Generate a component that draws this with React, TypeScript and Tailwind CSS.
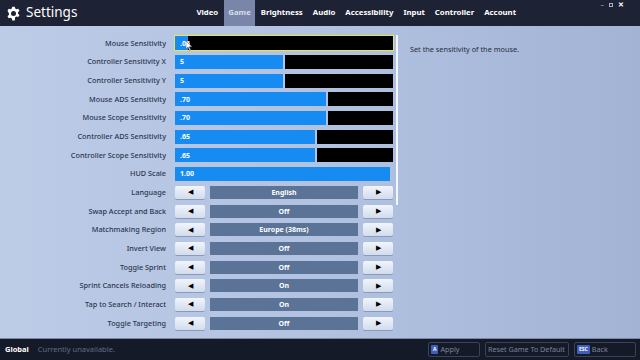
import React from 'react';

type Row =
  | { label: string; kind: 'slider'; value: string; pct: number; focused?: boolean }
  | { label: string; kind: 'choice'; value: string };

const rows: Row[] = [
  { label: 'Mouse Sensitivity', kind: 'slider', value: '.06', pct: 6, focused: true },
  { label: 'Controller Sensitivity X', kind: 'slider', value: '5', pct: 50 },
  { label: 'Controller Sensitivity Y', kind: 'slider', value: '5', pct: 50 },
  { label: 'Mouse ADS Sensitivity', kind: 'slider', value: '.70', pct: 70 },
  { label: 'Mouse Scope Sensitivity', kind: 'slider', value: '.70', pct: 70 },
  { label: 'Controller ADS Sensitivity', kind: 'slider', value: '.65', pct: 65 },
  { label: 'Controller Scope Sensitivity', kind: 'slider', value: '.65', pct: 65 },
  { label: 'HUD Scale', kind: 'slider', value: '1.00', pct: 100 },
  { label: 'Language', kind: 'choice', value: 'English' },
  { label: 'Swap Accept and Back', kind: 'choice', value: 'Off' },
  { label: 'Matchmaking Region', kind: 'choice', value: 'Europe (38ms)' },
  { label: 'Invert View', kind: 'choice', value: 'Off' },
  { label: 'Toggle Sprint', kind: 'choice', value: 'Off' },
  { label: 'Sprint Cancels Reloading', kind: 'choice', value: 'On' },
  { label: 'Tap to Search / Interact', kind: 'choice', value: 'On' },
  { label: 'Toggle Targeting', kind: 'choice', value: 'Off' },
];

const tabs = ['Video', 'Game', 'Brightness', 'Audio', 'Accessibility', 'Input', 'Controller', 'Account'];

const Gear = () => (
  <svg width="15" height="15" viewBox="0 0 24 24" fill="white">
    <path
      fillRule="evenodd"
      d="M10 1h4l.6 3.1a8 8 0 0 1 2 1.2l3-1 2 3.4-2.4 2.1a8 8 0 0 1 0 2.4l2.4 2.1-2 3.4-3-1a8 8 0 0 1-2 1.2L14 23h-4l-.6-3.1a8 8 0 0 1-2-1.2l-3 1-2-3.4 2.4-2.1a8 8 0 0 1 0-2.4L2.4 7.7l2-3.4 3 1a8 8 0 0 1 2-1.2L10 1zm2 7a4 4 0 1 0 0 8 4 4 0 0 0 0-8z"
    />
  </svg>
);

const ArrowBtn = ({ dir }: { dir: 'l' | 'r' }) => (
  <div className="w-[30px] h-[13px] rounded-[2px] bg-gradient-to-b from-[#f1f5fc] to-[#d3dcec] shadow-[0_1px_0_#8a9abb] flex items-center justify-center">
    <span className="text-[6.5px] leading-none text-black">{dir === 'l' ? '◀' : '▶'}</span>
  </div>
);

const Slider = ({ row }: { row: Extract<Row, { kind: 'slider' }> }) => (
  <div
    className={`relative w-[218px] h-[14px] flex ${row.focused ? 'outline outline-1 outline-[#e6e84a] bg-black' : ''}`}
  >
    <div
      className="h-full bg-[#168cf2] flex items-center pl-[5px]"
      style={{ width: row.pct === 100 ? '215px' : `${(row.pct / 100) * 216}px` }}
    >
      <span className="text-[7px] font-bold text-white leading-none">{row.value}</span>
    </div>
    {row.pct < 100 && <div className="flex-1 h-full bg-black ml-[2px]" />}
    {row.focused && (
      <svg className="absolute left-[11px] top-[5px]" width="7" height="10" viewBox="0 0 7 10">
        <path d="M0 0 L0 8 L2 6 L3.5 9.5 L4.6 9 L3.2 5.8 L6 5.8 Z" fill="white" stroke="#555" strokeWidth="0.5" />
      </svg>
    )}
  </div>
);

const Choice = ({ value }: { value: string }) => (
  <div className="w-[218px] flex items-center">
    <ArrowBtn dir="l" />
    <div className="ml-[5px] w-[148px] h-[13px] bg-[#5a7397] flex items-center justify-center">
      <span className="text-[7px] font-bold text-white leading-none">{value}</span>
    </div>
    <div className="ml-[5px]">
      <ArrowBtn dir="r" />
    </div>
  </div>
);

const FooterBtn = ({ k, label, w }: { k?: string; label: string; w: string }) => (
  <div className={`${w} h-[15px] border border-[#3b4259] rounded-[2px] flex items-center px-[2px] gap-[2px] whitespace-nowrap overflow-hidden`}>
    {k && (
      <span className="bg-[#3f5fb8] text-white text-[5px] font-bold leading-none px-[2px] py-[2px] rounded-[1px]">{k}</span>
    )}
    <span className="text-[7.2px] text-[#7d8499] leading-none">{label}</span>
  </div>
);

const App: React.FC = () => {
  return (
    <div className="w-[640px] h-[360px] overflow-hidden flex flex-col" style={{ fontFamily: '"Noto Sans", "Open Sans", sans-serif' }}>
      {/* Header */}
      <div className="h-[26px] bg-[#1e2235] flex items-stretch relative">
        <div className="flex items-center pl-[6px] gap-[5px]">
          <Gear />
          <span className="text-white text-[13.5px] leading-none">Settings</span>
        </div>
        <div className="flex items-stretch ml-[115px]">
          {tabs.map(t => (
            <div
              key={t}
              className={`flex items-center px-[4px] text-[7.8px] font-bold leading-none ${
                t === 'Game' ? 'bg-[#7986a9] text-[#d8deeb]' : 'text-white'
              } ${t === 'Video' ? '' : 'ml-[2px]'}`}
            >
              {t}
            </div>
          ))}
        </div>
        <div className="absolute right-[16px] top-[1px] flex items-center gap-[5px] text-[#aab0c2] text-[7px] leading-none">
          <span>–</span>
          <span className="w-[4px] h-[4px] border border-[#aab0c2]" />
          <span className="text-white font-bold">✕</span>
        </div>
      </div>

      {/* Content */}
      <div className="flex-1 bg-gradient-to-r from-[#bccbe6] via-[#b2c2e1] to-[#a3b3d4] flex pt-[8px]">
        <div className="flex flex-col">
          {rows.map(r => (
            <div key={r.label} className="h-[18.67px] flex items-center">
              <div className="w-[166px] text-right text-[7.3px] font-medium text-[#2c3650] leading-none">{r.label}</div>
              <div className="ml-[9px]">{r.kind === 'slider' ? <Slider row={r} /> : <Choice value={r.value} />}</div>
            </div>
          ))}
        </div>
        <div className="ml-[3px] mt-[1px] w-[2px] h-[170px] bg-[#f3f6fc]" />
        <div className="ml-[12px] pt-[12px] text-[7.3px] text-[#252d42] leading-none">Set the sensitivity of the mouse.</div>
      </div>

      {/* Footer */}
      <div className="h-[22px] bg-[#151a29] border-t border-[#7a88a8] flex items-center pl-[5px] pr-[4px]">
        <span className="text-white text-[7.5px] font-bold leading-none">Global</span>
        <span className="ml-[9px] text-[#626a80] text-[7.5px] leading-none">Currently unavailable.</span>
        <div className="ml-auto flex gap-[5px]">
          <FooterBtn k="A" label="Apply" w="w-[52px]" />
          <FooterBtn label="Reset Game To Default" w="w-[84px]" />
          <FooterBtn k="ESC" label="Back" w="w-[62px]" />
        </div>
      </div>
    </div>
  );
};

export default App;
